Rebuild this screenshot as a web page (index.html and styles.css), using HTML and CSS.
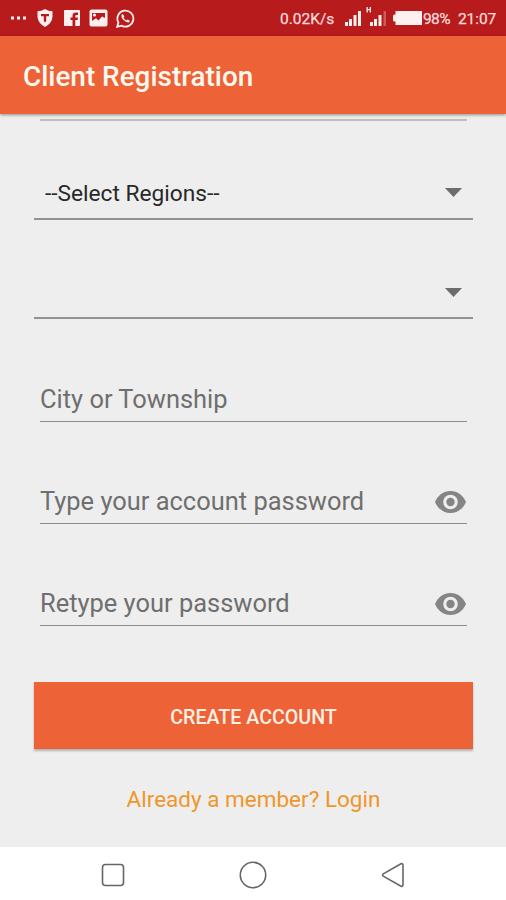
FILE: index.html
```html
<!DOCTYPE html>
<html lang="en">
<head>
<meta charset="utf-8">
<title>Client Registration</title>
<link rel="stylesheet" href="styles.css">
</head>
<body>
<div class="status">
  <div class="notifications">
    <svg class="dots" width="15" height="4" viewBox="0 0 15 4"><path d="M0 .5h3v3H0zM6 .5h3v3H6zM12 .5h3v3h-3z"/></svg>
    <svg class="shield" width="16" height="18" viewBox="0 0 16 18"><path d="M8 0Q11.500 2.300 15.500 2.300V8Q15 14 8 18Q1 14 .5 8V2.300Q4.500 2.300 8 0Z"/><path class="cut" d="M4 5h8v2.200H9.200V12L8 13.500 6.800 12V7.200H4z"/></svg>
    <svg class="facebook" width="16" height="16" viewBox="0 0 16 16"><rect width="16" height="16" rx="1"/><path class="cut" d="M8.500 16v-6H6.500V7.500h2V5.800Q8.500 2.500 12 2.500h2V5h-1.500Q11.300 5 11.300 6.200v1.300H14L13.600 10h-2.300v6z"/></svg>
    <svg class="gallery" width="19" height="18" viewBox="0 0 19 18"><rect x=".5" y=".5" width="18" height="17" rx="2"/><path class="cut" d="M3 4h13v5l-3-1.500-3.500 4L7 9.300 3 12z"/><circle cx="5.500" cy="6" r="1.600"/></svg>
    <svg class="whatsapp" width="19" height="19" viewBox="0 0 19 19"><path class="line" d="M1.200 17.800 2.400 13.500A8 8 0 1 1 5.500 16.600Z"/><path d="M6.700 5 5.400 6.300Q5 8.500 7.600 11.100Q10.400 13.900 12.800 13.500L14 12.100 11.700 10.500 10.500 11.500Q8.400 10.600 7.500 8.500L8.400 7.400Z"/></svg>
  </div>
  <span class="speed">0.02K/s</span>
  <svg class="signal" width="42" height="22" viewBox="0 0 42 22"><path d="M0 17h3v4H0zM4 14h3v7H4zM8.500 10h3v11h-3zM13 6h3v15h-3zM25 17h3v4h-3zM29 14h3v7h-3zM33.500 10h3v11h-3z"/><path class="faint" d="M38.500 6H41v15h-2.500z"/><path d="M21.500 2h1.300v2h1.900V2H26v5.500h-1.300V5.200h-1.900v2.300h-1.300z"/></svg>
  <svg class="battery" width="29" height="14" viewBox="0 0 29 14"><path d="M2.500 0H29v14H2.500V10.500H1.500Q0 10.500 0 9V5Q0 3.500 1.500 3.500h1z"/></svg>
  <span class="percent">98%</span>
  <span class="clock">21:07</span>
</div>
<header class="appbar"><h1><span>Client Registration</span></h1></header>
<main class="form">
  <div class="previous"></div>
  <div class="select regions"><span class="t-region">--Select Regions--</span><i class="arrow"></i></div>
  <div class="select district"><i class="arrow"></i></div>
  <div class="field city"><span>City or Township</span></div>
  <div class="field"><span>Type your account password</span>
    <svg class="eye" width="31" height="22" viewBox="0 0 31 22"><path fill-rule="evenodd" d="M15.500 0C8.500 0 2.600 4.500 0 11c2.600 6.500 8.500 11 15.500 11S28.400 17.500 31 11C28.400 4.500 22.500 0 15.500 0Zm0 18.300a7.300 7.300 0 1 1 0-14.600 7.300 7.300 0 0 1 0 14.600Zm0-11.500a4.200 4.200 0 1 0 0 8.400 4.200 4.200 0 0 0 0-8.400Z"/></svg>
  </div>
  <div class="field"><span>Retype your password</span>
    <svg class="eye" width="31" height="22" viewBox="0 0 31 22"><path fill-rule="evenodd" d="M15.500 0C8.500 0 2.600 4.500 0 11c2.600 6.500 8.500 11 15.500 11S28.400 17.500 31 11C28.400 4.500 22.500 0 15.500 0Zm0 18.300a7.300 7.300 0 1 1 0-14.600 7.300 7.300 0 0 1 0 14.600Zm0-11.500a4.200 4.200 0 1 0 0 8.400 4.200 4.200 0 0 0 0-8.400Z"/></svg>
  </div>
  <button class="create">CREATE ACCOUNT</button>
  <a class="login">Already a member? Login</a>
</main>
<nav class="navbar">
  <svg width="30" height="30" viewBox="0 0 30 30"><rect x="4.500" y="4.500" width="21" height="21" rx="3"/></svg>
  <svg width="30" height="30" viewBox="0 0 30 30"><circle cx="15" cy="15" r="12.700"/></svg>
  <svg width="30" height="30" viewBox="0 0 30 30"><path d="M23 3.800 5.300 13.800Q3.800 15 5.300 16.200L23 26.200Q25 26.800 25 24.800V5.200Q25 3.200 23 3.800Z"/></svg>
</nav>
</body>
</html>
```
FILE: styles.css
```css
* { box-sizing: border-box; }
body {
  margin: 0;
  width: 506px;
  height: 900px;
  overflow: hidden;
  display: flex;
  flex-direction: column;
  background: #eee;
  font-family: Roboto, "Liberation Sans", sans-serif;
}
svg { display: block; flex: none; }
span { white-space: nowrap; }

.status {
  flex: none;
  height: 36px;
  display: flex;
  align-items: center;
  padding-left: 11px;
  background: #b71b1c;
  color: #fbdcdc;
  fill: #fff0f0;
  font-size: 15.500px;
  line-height: 34px;
  -webkit-text-stroke: .25px #fbdcdc;
}
.notifications { display: flex; align-items: center; width: 269px; }
.shield { margin-left: 11px; }
.facebook { margin-left: 11px; }
.gallery { margin-left: 9px; }
.whatsapp { margin-left: 8px; }
.cut { fill: #b71b1c; }
.line { fill: none; stroke: #fff0f0; stroke-width: 1.8; }
.faint { opacity: .3; }
.speed { width: 65px; padding-top: 2px; }
.signal { margin-top: -4px; }
.battery { margin-left: 6px; }
.percent { width: 35px; margin-left: 1px; padding-top: 2px; letter-spacing: -.6px; }
.clock { padding-top: 2px; letter-spacing: -.1px; }

.appbar {
  position: relative;
  z-index: 1;
  flex: none;
  height: 78px;
  display: flex;
  align-items: center;
  padding: 4px 23px 0;
  background: #ed6337;
  color: #fff8ee;
  box-shadow: 0 1px 3px rgba(0, 0, 0, .4);
}
h1 { margin: 0; font-size: 27.900px; font-weight: 500; line-height: 36px; }

.form {
  flex: none;
  height: 733px;
  display: flex;
  flex-direction: column;
  padding: 0 33px 0 34px;
}
.previous { flex: none; height: 7px; margin: 0 6px; border-bottom: 2px solid #bdbdbd; }
.select {
  flex: none;
  height: 99px;
  display: flex;
  align-items: flex-end;
  justify-content: space-between;
  padding: 0 11px 9px;
  border-bottom: 2px solid #929292;
  color: #282828;
  line-height: 30px;
}
.district { justify-content: flex-end; }
.arrow {
  width: 17px;
  height: 9px;
  margin-bottom: 12px;
  background: #6c6c6c;
  clip-path: polygon(0 0, 100% 0, 50% 100%);
}
.district .arrow { margin-bottom: 11px; }
.field {
  flex: none;
  height: 102px;
  display: flex;
  align-items: flex-end;
  justify-content: space-between;
  margin: 0 6px;
  padding-bottom: 7px;
  border-bottom: 1px solid #8c8c8c;
  color: #6f6f6f;
  font-size: 25.450px;
  line-height: 30px;
}
.city { height: 103px; }
.t-region { font-size: 22.700px; }
.eye { margin: 0 1px 3px 0; fill: #858585; }
.create {
  flex: none;
  height: 67px;
  margin-top: 56px;
  padding: 4px 0 0;
  border: 0;
  background: #ed6337;
  color: #fff0e4;
  font: 500 19.650px/30px Roboto, sans-serif;
  box-shadow: 0 2px 2px rgba(0, 0, 0, .25);
}
.login {
  align-self: center;
  margin-top: 35px;
  color: #f0962a;
  font-size: 22.500px;
  line-height: 30px;
}
.navbar {
  flex: none;
  height: 53px;
  display: flex;
  align-items: center;
  justify-content: space-between;
  padding: 2px 98px 0;
  background: #fff;
}
.navbar svg { fill: none; stroke: #666; stroke-width: 1.6; }
```
